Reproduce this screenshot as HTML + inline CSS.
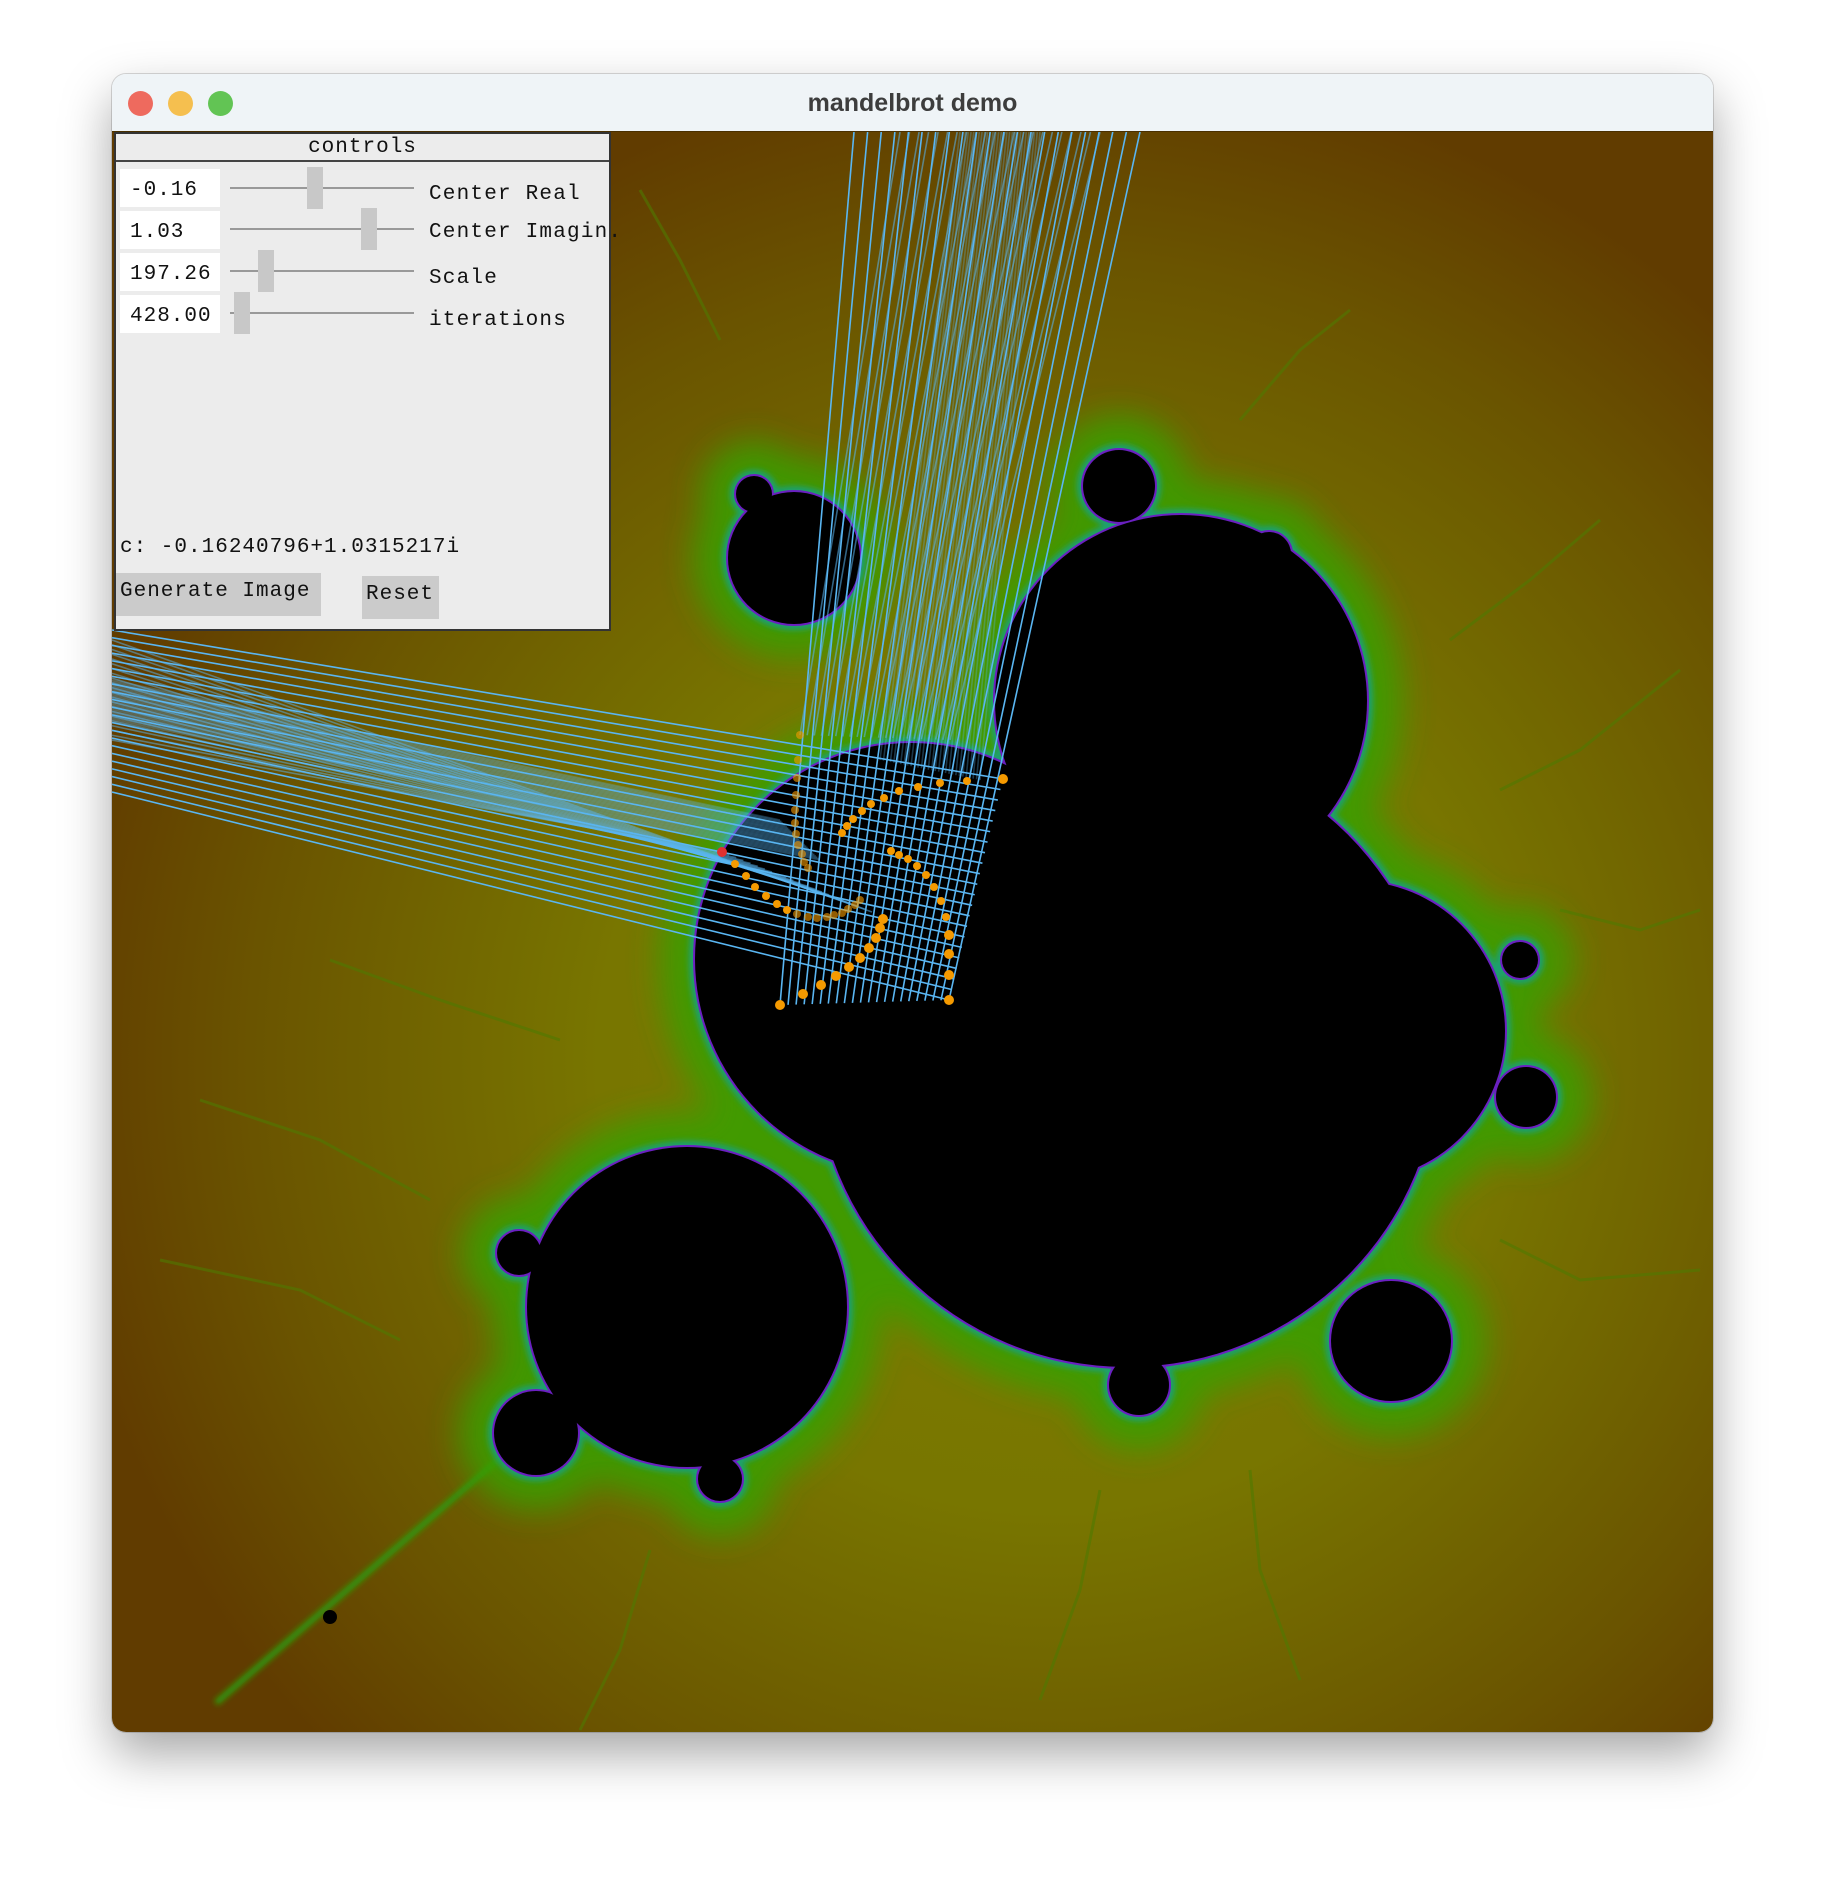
<!DOCTYPE html>
<html><head><meta charset="utf-8"><style>
html,body{margin:0;padding:0;background:#fff;width:1824px;height:1880px;overflow:hidden}
.win{position:absolute;left:112px;top:74px;width:1601px;height:1658px;border-radius:14px;overflow:hidden;box-shadow:0 22px 50px rgba(0,0,0,.35),0 0 0 1px rgba(0,0,0,.15);background:#f0f4f7}
.tb{position:absolute;left:0;top:0;width:100%;height:57px;background:#eff4f7;border-bottom:1px solid #4a3000}
.tt{position:absolute;left:0;right:0;top:15px;text-align:center;font:bold 25px "Liberation Sans",sans-serif;color:#3d3d3d}
.dot{position:absolute;top:17px;width:25px;height:25px;border-radius:50%}
svg.m{position:absolute;left:0;top:58px}
.panel{position:absolute;left:2px;top:58px;width:497px;height:499px;background:#ececec;border:2px solid #333;box-sizing:border-box;font-family:"Liberation Mono",monospace;color:#111}
.hd{height:26px;border-bottom:2px solid #444;text-align:center;font-size:21px;line-height:28px;letter-spacing:1px}
.box{position:absolute;left:4px;width:100px;height:38px;background:#fff;font-size:21px;line-height:44px;padding-left:10px;box-sizing:border-box;letter-spacing:1px}
.trk{position:absolute;left:114px;width:184px;height:2px;background:#999}
.th{position:absolute;width:16px;height:42px;background:#c8c8c8}
.lb{position:absolute;left:313px;font-size:21px;white-space:nowrap;letter-spacing:1.2px}
.btn{position:absolute;top:439px;height:43px;background:#cbcbcb;font-size:21px;line-height:38px;letter-spacing:1px;padding-left:4px;box-sizing:border-box}
</style></head><body>
<div class="win">
<svg class="m" width="1601" height="1600" viewBox="112 132 1601 1600">
<defs>
<radialGradient id="bg" cx="1050" cy="1060" r="1000" gradientUnits="userSpaceOnUse">
<stop offset="0" stop-color="#7e7e02"/><stop offset="0.45" stop-color="#787600"/><stop offset="0.8" stop-color="#6a5400"/><stop offset="1" stop-color="#613c00"/></radialGradient>
<filter id="bl" x="-50%" y="-50%" width="200%" height="200%"><feGaussianBlur stdDeviation="16"/></filter>
<filter id="bl2"><feGaussianBlur stdDeviation="3"/></filter>
<g id="blob">
<circle cx="1181" cy="701" r="186"/><circle cx="1355" cy="1031" r="150"/><circle cx="1127" cy="1055" r="312"/>
<circle cx="911" cy="959" r="216"/><circle cx="687" cy="1307" r="160"/>
<circle cx="794" cy="558" r="66"/><circle cx="1119" cy="486" r="36"/><circle cx="1391" cy="1341" r="60"/>
<circle cx="519" cy="1253" r="22"/><circle cx="536" cy="1433" r="42"/><circle cx="720" cy="1479" r="22"/>
<circle cx="1139" cy="1385" r="30"/><circle cx="1526" cy="1097" r="30"/><circle cx="1520" cy="960" r="18"/>
<circle cx="1269" cy="554" r="22"/><circle cx="754" cy="494" r="18"/>
</g></defs>
<rect x="112" y="132" width="1601" height="1600" fill="url(#bg)"/>
<g stroke="#4f7a00" stroke-width="3" fill="none" opacity=".6">
<path d="M1240 420 L1300 350 L1350 310 M1450 640 L1530 580 L1600 520 M1500 790 L1580 750 L1680 670 M1560 910 L1640 930 L1700 910 M1500 1240 L1580 1280 L1700 1270 M1250 1470 L1260 1570 L1300 1680 M1100 1490 L1080 1590 L1040 1700 M650 1550 L620 1650 L580 1730 M400 1340 L300 1290 L160 1260 M430 1200 L320 1140 L200 1100 M560 1040 L440 1000 L330 960 M640 190 L680 260 L720 340"/>
</g>
<path d="M216 1703 L564 1403" stroke="#2e9a08" stroke-width="6" filter="url(#bl2)"/>
<use href="#blob" fill="none" stroke="#38a000" stroke-width="70" filter="url(#bl)" opacity=".85"/>
<use href="#blob" fill="none" stroke="#1aa070" stroke-width="12" filter="url(#bl2)"/>
<use href="#blob" fill="none" stroke="#6a20c0" stroke-width="4"/>
<use href="#blob" fill="#000"/>
<circle cx="330" cy="1617" r="7" fill="#000"/>
<g id="lines" stroke="#5ab6f2" stroke-width="1.6" fill="none"></g>
<g id="dots" fill="#f59a00"></g>
<circle cx="722" cy="852" r="5" fill="#e03030"/>
</svg>
<div class="tb"><div class="dot" style="left:16px;background:#ee6a5e"></div><div class="dot" style="left:56px;background:#f5bf4f"></div><div class="dot" style="left:96px;background:#62c454"></div><div class="tt">mandelbrot demo</div></div>
<div class="panel">
<div class="hd">controls</div>
<div class="box" style="top:35px">-0.16</div><div class="trk" style="top:53px"></div><div class="th" style="left:191px;top:33px"></div><div class="lb" style="top:49px">Center Real</div>
<div class="box" style="top:77px">1.03</div><div class="trk" style="top:94px"></div><div class="th" style="left:245px;top:74px"></div><div class="lb" style="top:87px">Center Imagin.</div>
<div class="box" style="top:119px">197.26</div><div class="trk" style="top:136px"></div><div class="th" style="left:142px;top:116px"></div><div class="lb" style="top:133px">Scale</div>
<div class="box" style="top:161px">428.00</div><div class="trk" style="top:178px"></div><div class="th" style="left:118px;top:158px"></div><div class="lb" style="top:175px">iterations</div>
<div style="position:absolute;left:4px;top:402px;font-size:21px;letter-spacing:1px">c: -0.16240796+1.0315217i</div>
<div class="btn" style="left:0;width:205px">Generate Image</div>
<div class="btn" style="left:246px;width:77px;top:442px">Reset</div>
</div>
</div>
<script>
var NS="http://www.w3.org/2000/svg",L=document.getElementById("lines"),D=document.getElementById("dots");
function ln(a,b,c,d,o){var e=document.createElementNS(NS,"line");e.setAttribute("x1",a);e.setAttribute("y1",b);e.setAttribute("x2",c);e.setAttribute("y2",d);if(o)e.setAttribute("opacity",o);L.appendChild(e);}
function dt(x,y,r,o){var e=document.createElementNS(NS,"circle");e.setAttribute("cx",x);e.setAttribute("cy",y);e.setAttribute("r",r);if(o)e.setAttribute("opacity",o);D.appendChild(e);}
var N=22,i;
for(i=0;i<N;i++){var t=i/(N-1);
 ln(780+t*169,1005-t*5,854+t*286,132);
 ln(800+t*150,735+t*5,900+t*200,132,.55);
 ln(949+t*54,1000-t*221,112,792-t*162);
 ln(722+t*150,852+t*60,112,740-t*100,.5);
}
for(i=0;i<30;i++){var t=i/29;ln(880+t*100,760+t*20,960+t*80,132,.3);ln(780+t*40,820+t*40,112,680+t*40,.3);}
var big=[[780,1005],[803,994],[821,985],[836,976],[849,967],[860,958],[869,948],[876,938],[880,928],[883,919],[949,1000],[949,975],[949,954],[949,935],[946,917],[941,901],[934,887],[926,875],[917,866],[908,859],[899,855],[891,851],[1003,779],[967,781],[940,783],[918,787],[899,791],[884,798],[871,804],[862,811],[853,819],[847,826],[842,833],[800,735],[798,760],[797,778],[796,795],[795,810],[795,823],[796,834],[798,845],[802,854],[804,862],[808,868],[735,864],[746,876],[755,887],[766,896],[777,904],[787,910],[797,914],[808,917],[817,918],[827,917],[834,915],[842,913],[848,909],[855,905],[860,900]];
big.forEach(function(p,k){dt(p[0],p[1],k<14||k==22?5:4,(k>=33&&k<44)||k>=50?.6:1);});
</script>
</body></html>
